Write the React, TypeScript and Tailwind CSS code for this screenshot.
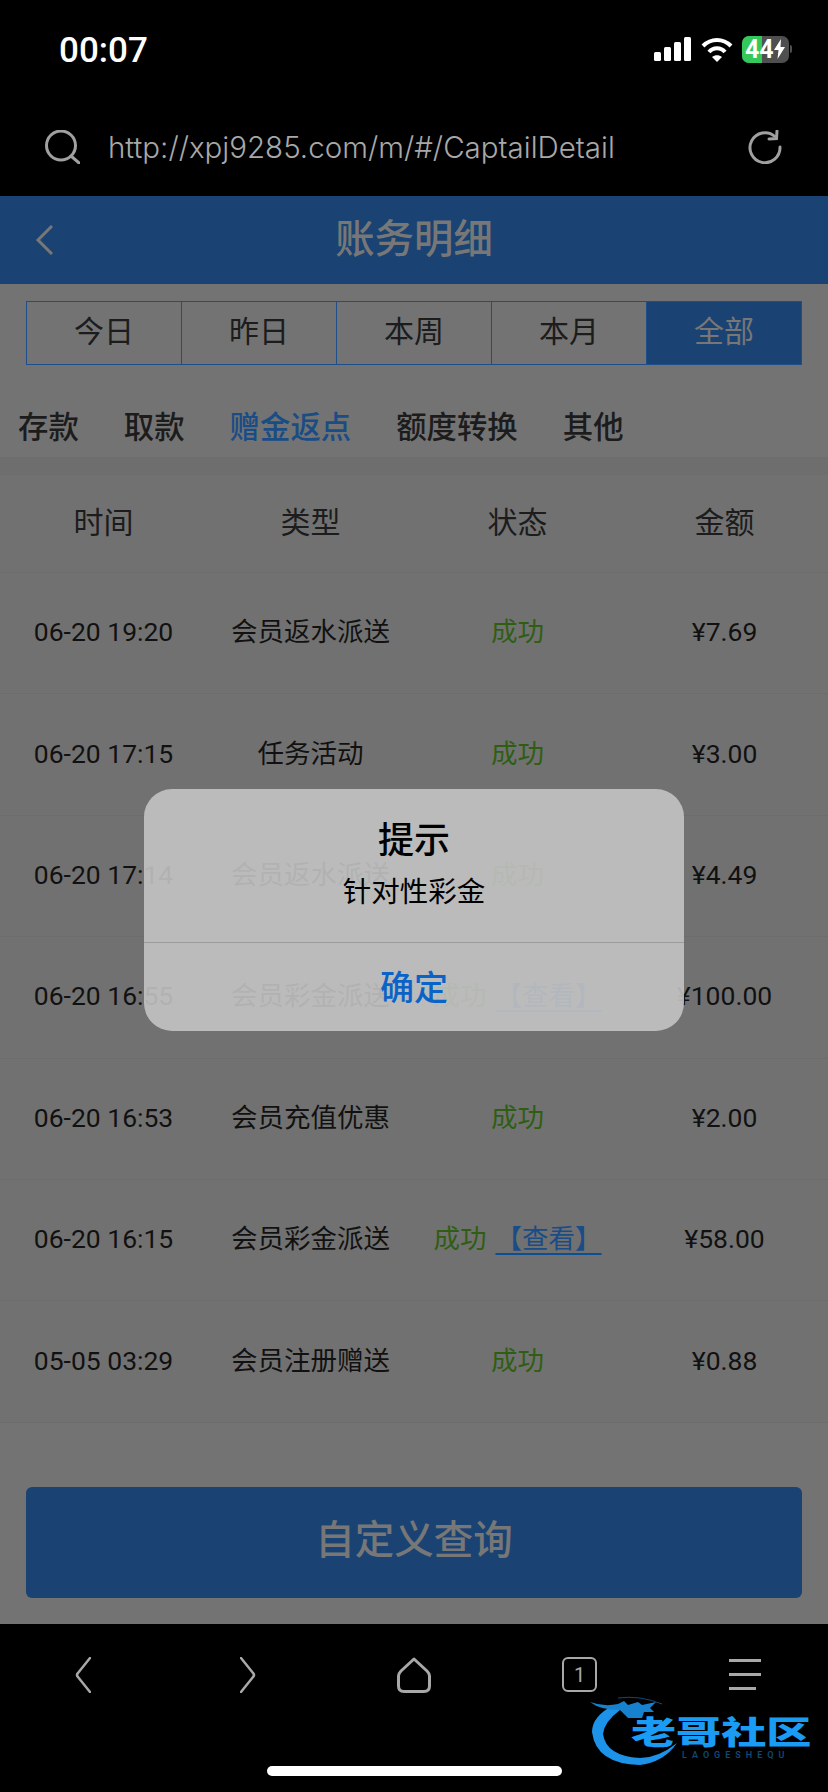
const sans = "font-['Roboto','Noto_Sans_CJK_SC',sans-serif]";

const periods = ["今日", "昨日", "本周", "本月", "全部"];
const kinds = ["存款", "取款", "赠金返点", "额度转换", "其他"];
const rows = [
  { time: "06-20 19:20", type: "会员返水派送", amount: "¥7.69" },
  { time: "06-20 17:15", type: "任务活动", amount: "¥3.00" },
  { time: "06-20 17:14", type: "会员返水派送", amount: "¥4.49" },
  { time: "06-20 16:55", type: "会员彩金派送", amount: "¥100.00", view: true },
  { time: "06-20 16:53", type: "会员充值优惠", amount: "¥2.00" },
  { time: "06-20 16:15", type: "会员彩金派送", amount: "¥58.00", view: true },
  { time: "05-05 03:29", type: "会员注册赠送", amount: "¥0.88" },
];

const StatusBar = () => (
  <div className="flex h-[100px] items-center justify-between pr-[36px] pl-[59px]">
    <span className="pt-[3px] text-[35px] font-medium text-white">00:07</span>
    <div className="flex items-center gap-[9px] pb-[2px]">
      <svg width="38" height="24" viewBox="0 0 38 24" fill="white">
        <rect x="0" y="15" width="7" height="9" rx="1.5" />
        <rect x="10" y="10" width="7" height="14" rx="1.5" />
        <rect x="20" y="5" width="7" height="19" rx="1.5" />
        <rect x="30" y="0" width="7" height="24" rx="1.5" />
      </svg>
      <svg width="32" height="25" viewBox="0 0 32 25" fill="none" stroke="white" strokeWidth="4">
        <path d="M2 9 C10 1 22 1 30 9" />
        <path d="M8 15 C12 10 20 10 24 15" />
        <path d="M16 25 L11 20 C14 17.5 18 17.5 21 20 Z" fill="white" stroke="none" />
      </svg>
      <div className="flex items-center">
        <div className="relative flex h-[27px] w-[47px] overflow-hidden rounded-[7px] bg-[#4f4f4f]">
          <div className="h-full w-[20px] bg-[#34c759]" />
          <div className="absolute inset-0 flex items-center pl-[3px]">
            <span className="text-[25px] leading-none font-bold text-white">44</span>
            <svg width="11" height="20" viewBox="0 0 11 20" fill="white">
              <path d="M7 0 L0 11 H4.5 L3.5 20 L11 8 H6.5 Z" />
            </svg>
          </div>
        </div>
        <div className="ml-[1px] h-[8px] w-[2px] rounded-r-sm bg-[#4f4f4f]" />
      </div>
    </div>
  </div>
);

const UrlBar = () => (
  <div className="flex h-[96px] items-center justify-between pr-[46px] pb-[2px] pl-[44px]">
    <div className="flex items-center">
      <svg width="36" height="34" viewBox="0 0 36 34" fill="none" stroke="#a0a0a0" strokeWidth="3">
        <circle cx="17" cy="15.5" r="14.5" />
        <path d="M27 26 L35 33" strokeLinecap="round" />
      </svg>
      <span className="ml-[28px] font-['Inter'] text-[29.5px] font-light text-[#a8a8a8]">
        http://xpj9285.com/m/#/CaptailDetail
      </span>
    </div>
    <svg width="34" height="34" viewBox="0 0 34 34" fill="none" stroke="#a0a0a0" strokeWidth="3" strokeLinecap="round">
      <path d="M27 6.5 A15 15 0 1 0 32 17" />
      <path d="M21 9 L28.5 8.5 L29 1" />
    </svg>
  </div>
);

const BottomBar = () => (
  <div className="relative h-[168px] bg-black">
    <div className="grid grid-cols-5 justify-items-center pt-[33px]">
      <svg width="16" height="36" viewBox="0 0 16 36" fill="none" stroke="#a8a8a8" strokeWidth="2.5" strokeLinecap="round">
        <path d="M15 1 L3 16 Q1 18 3 20 L15 35" />
      </svg>
      <svg width="16" height="36" viewBox="0 0 16 36" fill="none" stroke="#a8a8a8" strokeWidth="2.5" strokeLinecap="round">
        <path d="M1 1 L13 16 Q15 18 13 20 L1 35" />
      </svg>
      <svg width="34" height="36" viewBox="0 0 34 36" fill="none" stroke="#a8a8a8" strokeWidth="3">
        <path d="M17 2 L30 14 Q32.5 16.5 32.5 19 V29 Q32.5 34.5 27 34.5 H7 Q1.5 34.5 1.5 29 V19 Q1.5 16.5 4 14 Z" strokeLinejoin="round" />
      </svg>
      <div className="flex h-[35px] w-[35px] items-center justify-center rounded-[6px] border-[2.5px] border-[#a8a8a8] text-[20px] text-[#a8a8a8]">
        1
      </div>
      <div className="flex w-[32px] flex-col gap-[11px] pt-[2px]">
        <div className="h-[3px] bg-[#a8a8a8]" />
        <div className="h-[3px] bg-[#a8a8a8]" />
        <div className="h-[3px] w-[27px] bg-[#a8a8a8]" />
      </div>
    </div>

    {/* watermark */}
    <div className="absolute top-[72px] left-[590px] h-[80px] w-[230px]">
      <svg width="100" height="78" viewBox="0 0 100 78" fill="none" className="absolute top-0 left-0">
        <path d="M24 9 Q2 20 2 36 Q6 68 50 69 Q74 66 87 47 Q68 62 50 62 Q16 60 13 38 Q14 26 30 14 Z" fill="#1c93e8" />
        <path d="M0 6 Q14 11 28 8 L34 5 L38 9 L48 6 L52 9 L66 6 L60 12 L64 16 L54 16 L52 22 L38 22 L30 14 Q10 14 0 6 Z" fill="#1682cf" />
        <path d="M28 2 Q50 -1 72 8" stroke="#0f4a78" strokeWidth="1" />
      </svg>
      <span className="absolute top-[15px] left-[41px] origin-left scale-x-[1.41] text-[32px] leading-[44px] font-black whitespace-nowrap text-[#1a9cf5]">
        老哥社区
      </span>
      <span className="absolute top-[53px] left-[92px] text-[9px] leading-[12px] font-semibold tracking-[5px] whitespace-nowrap text-[#0f4a78]">
        LAOGESHEQU
      </span>
    </div>

    <div className="absolute bottom-[16px] left-[267px] h-[10px] w-[295px] rounded-full bg-white" />
  </div>
);

const App = () => {
  return (
    <div className={`relative h-[1792px] w-[828px] overflow-hidden bg-black ${sans}`}>
      <StatusBar />
      <UrlBar />

      <div className="relative flex h-[1428px] flex-col bg-[#737373]">
        <div className="relative flex h-[88px] shrink-0 items-center justify-center bg-[#1a4373]">
          <svg width="18" height="30" viewBox="0 0 18 30" fill="none" stroke="#777" strokeWidth="3" className="absolute left-[35px]">
            <path d="M17 1 L3 15 L17 29" />
          </svg>
          <span className="text-[39.4px] font-medium text-[#777]">账务明细</span>
        </div>

        <div className="mx-[26px] mt-[17px] flex h-[64px] shrink-0 border border-[#1f4f8a]">
          {periods.map((p, i) => (
            <div
              key={p}
              className={`flex flex-1 items-center justify-center pb-[3px] text-[30px] ${
                i === 4 ? "bg-[#1a4373] text-[#777]" : "border-r border-[#1f4f8a] text-[#1c1c1c]"
              }`}
            >
              {p}
            </div>
          ))}
        </div>

        <div className="flex h-[92px] shrink-0 items-center gap-[45px] pt-[34px] pl-[18px] text-[30.4px] font-medium text-[#1c1c1c]">
          {kinds.map((k) => (
            <span key={k} className={k === "赠金返点" ? "text-[#1a4c85]" : ""}>
              {k}
            </span>
          ))}
        </div>

        <div className="h-[18px] shrink-0 bg-[#6e6e6e]" />

        <div className="grid h-[98px] shrink-0 grid-cols-4 items-center border-b border-[#6c6c6c] bg-[#717171] pb-[2px] text-center text-[30px] text-[#1c1c1c]">
          <span>时间</span>
          <span>类型</span>
          <span>状态</span>
          <span>金额</span>
        </div>

        {rows.map((r) => (
          <div
            key={r.time}
            className="grid h-[121.4px] shrink-0 grid-cols-4 items-center border-b border-[#6c6c6c] bg-[#717171] pb-[2px] text-center text-[26.5px] text-[#111]"
          >
            <span>{r.time}</span>
            <span>{r.type}</span>
            <span className="whitespace-nowrap text-[#2f5e12]">
              成功
              {r.view && (
                <span className="ml-[9px] text-[#1a4c85] underline decoration-[#0b4f94] decoration-2 underline-offset-[5px]">
                  【查看】
                </span>
              )}
            </span>
            <span>{r.amount}</span>
          </div>
        ))}

        <div className="mx-[26px] mt-auto mb-[26px] flex h-[111px] shrink-0 items-center justify-center rounded-[6px] bg-[#1a4373] pb-[3px] text-[39.5px] font-medium text-[#777]">
          自定义查询
        </div>

        <div className="absolute top-[593px] left-[144px] w-[540px] rounded-[28px] bg-[#c3c3c3]/90 text-center">
          <div className="flex h-[153px] flex-col items-center pt-[28px]">
            <span className="text-[36px] leading-[48px] font-medium text-black">提示</span>
            <span className="mt-[8px] text-[28.5px] leading-[40px] text-black">针对性彩金</span>
          </div>
          <div className="flex h-[89px] items-center justify-center border-t border-[#9c9c9c] pt-[2px] text-[34px] font-medium text-[#0a63c7]">
            确定
          </div>
        </div>
      </div>

      <BottomBar />
    </div>
  );
};

export default App;
